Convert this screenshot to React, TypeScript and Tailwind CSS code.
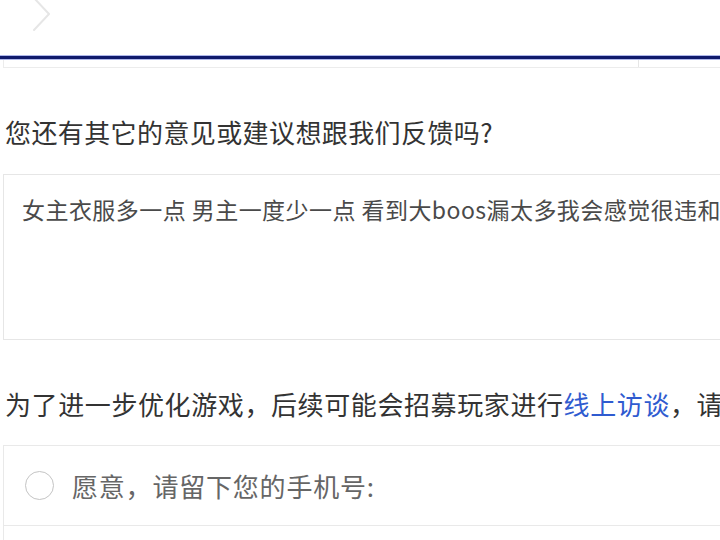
export default function App() {
  return (
    <div className="w-[720px] h-[540px] overflow-hidden bg-white font-['Noto_Sans_CJK_SC','Noto_Sans',sans-serif]">
      {/* header with back chevron */}
      <div className="h-[55px] pl-[32px]">
        <svg width="20" height="32" viewBox="0 0 20 32" fill="none">
          <path d="M2 -2 L17 14 L2 30" stroke="#e6e6e6" strokeWidth="2" strokeLinecap="round" strokeLinejoin="round" />
        </svg>
      </div>
      <div className="h-[5px] bg-[#101a6c] border-y border-[#aeb7ea]" />
      <div className="ml-[3px] h-[8px] flex border-l border-b border-[#ececec]">
        <div className="w-[635px] border-r border-[#e6e6e6]" />
      </div>

      {/* question 1 */}
      <p className="mt-[46px] pl-[5px] text-[26px] leading-[36px] tracking-[0.4px] text-[#333] whitespace-nowrap">
        您还有其它的意见或建议想跟我们反馈吗?
      </p>
      <div className="mt-[24px] ml-[3px] w-[760px] h-[166px] border border-[#e6e6e6] px-[18px] pt-[18px]">
        <p className="text-[23px] leading-[32px] tracking-[0.45px] text-[#4a4a4a] whitespace-nowrap">
          女主衣服多一点 男主一度少一点 看到大boos漏太多我会感觉很违和我
        </p>
      </div>

      {/* question 2 */}
      <p className="mt-[46px] pl-[5px] text-[26px] leading-[36px] tracking-[0.6px] text-[#333] whitespace-nowrap">
        为了进一步优化游戏，后续可能会招募玩家进行<span className="text-[#2f5bd0]">线上访谈</span>，请您留下联系方式
      </p>
      <div className="mt-[23px] ml-[3px] w-[760px] border-l border-t border-[#e9e9e9]">
        <div className="h-[80px] flex items-center pl-[21px] gap-[18px] border-b border-[#e9e9e9]">
          <span className="w-[29px] h-[29px] rounded-full border-[1.5px] border-[#c4c4c4] shrink-0" />
          <span className="text-[26px] leading-[36px] tracking-[0.8px] text-[#666] whitespace-nowrap">
            愿意，请留下您的手机号:
          </span>
        </div>
        <div className="h-[80px]" />
      </div>
    </div>
  );
}
